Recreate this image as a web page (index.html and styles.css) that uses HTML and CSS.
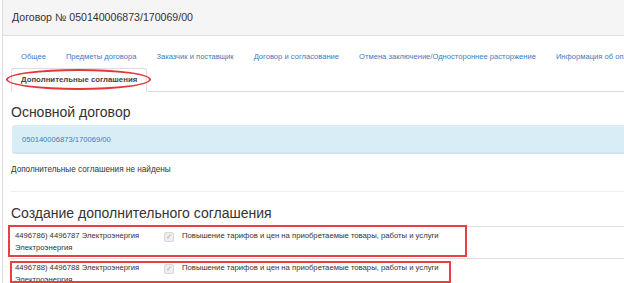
FILE: index.html
```html
<!DOCTYPE html>
<html lang="ru">
<head>
    <meta charset="UTF-8">
    <title>Договор № 050140006873/170069/00</title>
    <link rel="stylesheet" href="styles.css">
</head>
<body>

<div class="panel">
    <div class="panel-heading">Договор № 050140006873/170069/00</div>

    <div class="panel-body">
        <!-- Tabs -->
        <ul class="nav-tabs">
            <li><a href="#">Общее</a></li>
            <li><a href="#">Предметы договора</a></li>
            <li><a href="#">Заказчик и поставщик</a></li>
            <li><a href="#">Договор и согласование</a></li>
            <li><a href="#">Отмена заключение/Одностороннее расторжение</a></li>
            <li><a href="#">Информация об оплате</a></li>
            <li class="active">
                <a href="#">Дополнительные соглашения</a>
                <span class="mark-ellipse"></span>
            </li>
        </ul>

        <h3>Основной договор</h3>
        <div class="alert-info"><a href="#">050140006873/170069/00</a></div>
        <p class="note">Дополнительные соглашения не найдены</p>

        <hr>

        <h3>Создание дополнительного соглашения</h3>
        <table class="agreements">
            <tr>
                <td class="col-name">4496786) 4496787 Электроэнергия<br>Электроэнергия<span class="mark-box first"></span></td>
                <td class="col-check"><span class="check">&#10003;</span></td>
                <td>Повышение тарифов и цен на приобретаемые товары, работы и услуги</td>
            </tr>
            <tr>
                <td class="col-name">4496788) 4496788 Электроэнергия<br>Электроэнергия<span class="mark-box second"></span></td>
                <td class="col-check"><span class="check">&#10003;</span></td>
                <td>Повышение тарифов и цен на приобретаемые товары, работы и услуги</td>
            </tr>
        </table>
    </div>
</div>

</body>
</html>
```

FILE: styles.css
```css
body {
    margin: 0;
    font-family: 'Liberation Sans', Arial, sans-serif;
    color: #333;
    background-color: #fff;
    overflow: hidden;
}

a {
    color: #3b7bbf;
    text-decoration: none;
}

.panel {
    width: 760px;
    margin-left: 2px;
    border-left: 1px solid #ddd;
}

.panel-heading {
    height: 35px;
    line-height: 35px;
    padding-left: 9px;
    background-color: #f5f5f5;
    border-bottom: 1px solid #ddd;
    font-size: 10.6px;
}

.panel-body {
    padding: 9px 0 0 8px;
}

/* Tabs */
.nav-tabs {
    list-style: none;
    margin: 0;
    padding: 0;
    display: flex;
    flex-wrap: wrap;
    border-bottom: 1px solid #ddd;
}

.nav-tabs li {
    position: relative;
    margin-bottom: -1px;
}

.nav-tabs a {
    display: block;
    padding: 0 9px;
    line-height: 22px;
    font-size: 7.6px;
    border: 1px solid transparent;
    border-radius: 3px 3px 0 0;
}

.nav-tabs li.active a {
    color: #444;
    font-weight: bold;
    font-size: 7.8px;
    background-color: #fff;
    border-color: #ddd #ddd transparent;
}

.mark-ellipse {
    position: absolute;
    left: -5px;
    top: 1px;
    width: 141px;
    height: 17px;
    border: 2px solid #e2373c;
    border-radius: 50%;
}

h3 {
    font-size: 14px;
    font-weight: normal;
    margin: 12px 0 4px;
    line-height: 17px;
}

.alert-info {
    background-color: #d9edf7;
    border-bottom: 2px solid #cfe6f1;
    border-radius: 3px 0 0 3px;
    margin-left: 1px;
    height: 27px;
    line-height: 29px;
    padding-left: 10px;
    font-size: 7.6px;
}

.note {
    font-size: 8.2px;
    margin: 11px 0 0;
}

hr {
    border: 0;
    border-top: 1px solid #eee;
    margin: 17px 0 0;
}

hr + h3 {
    margin-top: 13px;
}

/* Table of agreements */
.agreements {
    border-collapse: collapse;
    width: 100%;
    font-size: 7.7px;
}

.agreements td {
    border-top: 1px solid #ddd;
    padding: 3px 4px 4px;
    vertical-align: top;
    line-height: 12px;
}

.col-name {
    position: relative;
    width: 141px;
    white-space: nowrap;
}

.col-check {
    width: 10px;
}

.check {
    display: inline-block;
    width: 8px;
    height: 8px;
    margin-top: 2px;
    border: 1px solid #d8d8d8;
    border-radius: 2px;
    background-color: #eee;
    color: #aaa;
    font-size: 7px;
    line-height: 8px;
    text-align: center;
}

.mark-box {
    position: absolute;
    border: 2px solid #e8403f;
    pointer-events: none;
}

.mark-box.first {
    left: -3px;
    top: -2px;
    width: 455px;
    height: 28px;
}

.mark-box.second {
    left: -1px;
    top: 2px;
    width: 437px;
    height: 18px;
}
```
